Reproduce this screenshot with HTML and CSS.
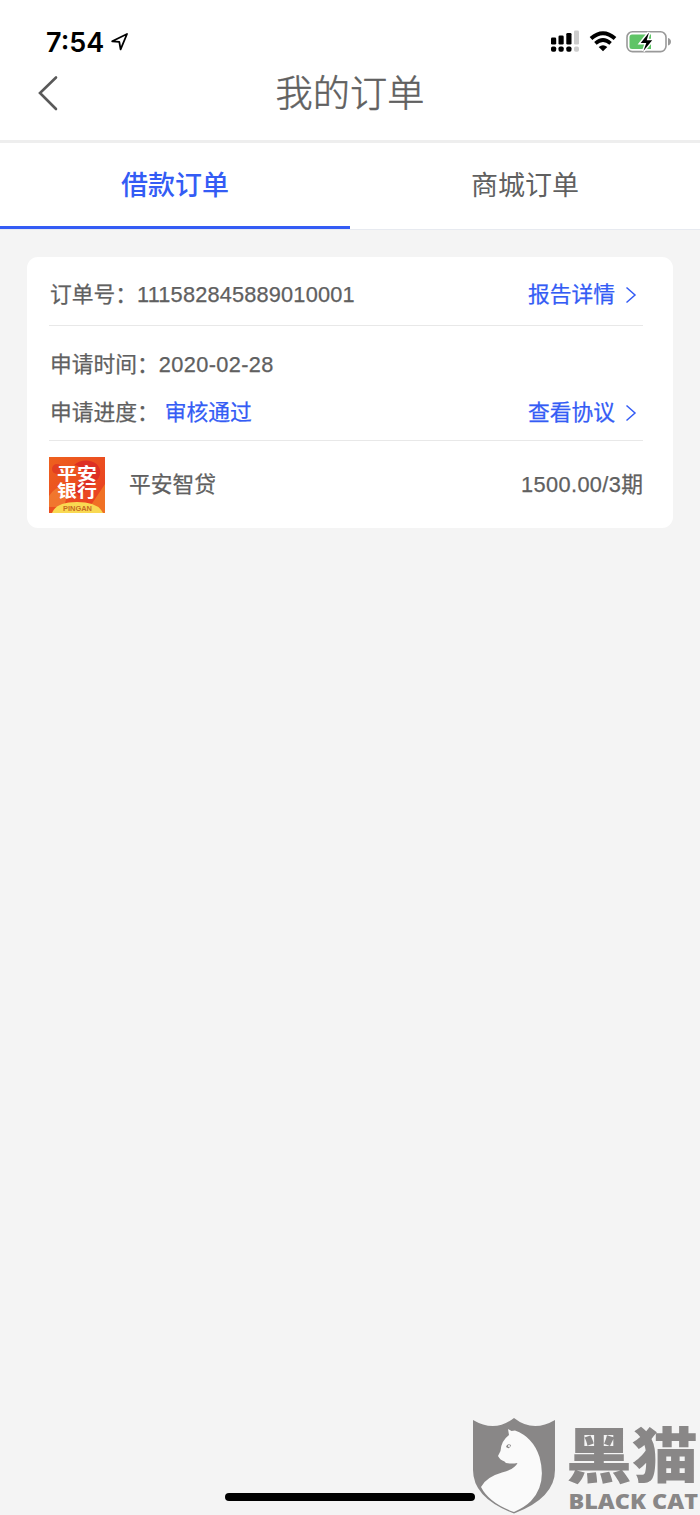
FILE: index.html
```html
<!DOCTYPE html>
<html lang="zh-CN">
<head>
<meta charset="utf-8">
<title>我的订单</title>
<link rel="stylesheet" href="styles.css">
</head>
<body>
<div class="screen">
  <header class="header">
    <div class="status">
      <span class="time">7:54</span>
      <svg class="location" width="20" height="20" viewBox="0 0 20 20"><path d="M3.200 9.300 L18 2 L11.600 17.300 L10.300 9.800 Z" fill="none" stroke="#000" stroke-width="1.800" stroke-linejoin="round"/></svg>
      <span class="grow"></span>
      <svg class="signal" width="30" height="24" viewBox="0 0 30 24">
        <g fill="#000"><rect x="0" y="7.500" width="5.200" height="7" rx="1.300"/><rect x="7.500" y="5.500" width="5.200" height="9" rx="1.300"/><rect x="15.300" y="3" width="5.200" height="11.500" rx="1.300"/><rect x="0" y="16.500" width="5.200" height="5.200" rx="1.800"/><rect x="7.500" y="16.500" width="5.200" height="5.200" rx="1.800"/><rect x="15.300" y="16.500" width="5.200" height="5.200" rx="1.800"/></g>
        <g fill="#ccc"><rect x="23" y="0.500" width="5" height="14" rx="1.300"/><rect x="23" y="16.500" width="5" height="5.200" rx="1.800"/></g>
      </svg>
      <svg class="wifi" width="28" height="22" viewBox="0 0 28 22"><path d="M2 7.500 Q14 -3 26 7.500" fill="none" stroke="#000" stroke-width="4"/><path d="M6.400 12.300 Q14 5.700 21.600 12.300" fill="none" stroke="#000" stroke-width="3.700"/><path d="M9.700 16 Q14 12.400 18.300 16 L14 20.300 Z"/></svg>
      <svg class="battery" width="46" height="24" viewBox="0 0 46 24">
        <rect x="1" y="1.800" width="39" height="19.800" rx="5.500" fill="#fff" stroke="#999" stroke-width="1.600"/>
        <path d="M6 4.400 H25 V19 H6 Q3.500 19 3.500 16.500 V7 Q3.500 4.400 6 4.400 Z" fill="#5fc466"/>
        <path d="M42 8 Q45 9 45 11.700 Q45 14.500 42 15.500 Z" fill="#999"/>
        <path d="M23 2.500 L14.700 13 H20.300 L17.400 21 L26.200 10.300 H20.700 Z" stroke="#fff" stroke-width="3" paint-order="stroke"/>
      </svg>
    </div>
    <div class="navbar">
      <svg class="back" width="24" height="38" viewBox="0 0 24 38"><path d="M20 3.500 L4 19 L20 35" fill="none" stroke="#595959" stroke-width="2.600" stroke-linecap="round"/></svg>
      <h1 class="title">我的订单</h1>
    </div>
  </header>
  <nav class="tabs">
    <a class="tab active">借款订单</a>
    <a class="tab">商城订单</a>
  </nav>
  <main class="content">
    <section class="card">
      <div class="row number">
        <span>订单号：<span class="digits">111582845889010001</span></span>
        <a class="link">报告详情<svg width="12" height="18" viewBox="0 0 12 18"><path d="M1.500 1.500 L10 9 L1.500 16.500"/></svg></a>
      </div>
      <div class="details">
        <div class="row"><span>申请时间：<span class="digits date">2020-02-28</span></span></div>
        <div class="row">
          <span>申请进度：<b class="state">审核通过</b></span>
          <a class="link">查看协议<svg width="12" height="18" viewBox="0 0 12 18"><path d="M1.500 1.500 L10 9 L1.500 16.500"/></svg></a>
        </div>
      </div>
      <div class="row product">
        <svg class="logo" width="56" height="56" viewBox="0 0 56 56">
          <defs><linearGradient id="orange" x1="0" y1="0" x2="1" y2="1"><stop offset="0" stop-color="#ee611e"/><stop offset="1" stop-color="#e83b22"/></linearGradient></defs>
          <rect width="56" height="56" fill="url(#orange)"/>
          <path d="M25 8 C34 0 49 3 51 13 C53 24 39 29 31 39 L22 33 C37 23 39 10 25 8Z" fill="#dd3024"/>
          <path d="M0 39 Q9 26 20 31 L15 50 H0Z" fill="#f48b35" opacity=".65"/>
          <circle cx="8" cy="12" r="5" fill="#e23f21"/>
          <path d="M42 48 L56 27 V56 H42Z" fill="#f07125"/>
          <path d="M3 56 Q7 45 28 45 Q49 45 54 56Z" fill="#f9d952"/>
          <text class="logo-cn" transform="translate(8 23.300) scale(1.170 1)">平安</text>
          <text class="logo-cn" transform="translate(8 40.200) scale(1.170 1)">银行</text>
          <text class="logo-en" x="28.500" y="54" textLength="29" lengthAdjust="spacingAndGlyphs">PINGAN</text>
        </svg>
        <span class="product-name">平安智贷</span>
        <span class="amount"><span class="digits date">1500.00/3</span>期</span>
      </div>
    </section>
  </main>
  <div class="home-indicator"></div>
  <div class="watermark">
    <svg width="228" height="100" viewBox="0 0 228 100">
      <path d="M1 5 Q23 18 42 3 Q61 18 83 5 V55 Q83 83 42 98.500 Q1 83 1 55Z" fill="#898787"/>
      <path d="M36 14 L39.500 16 L43 15.500 Q61 22 67.500 42 Q75 69 59 86 Q53 92 42 97 Q17 88 9 72 Q14 62 30 57.500 Q43 54 45.500 48 Q39 49 34 48 L32.500 46.500 Q28 45 26 41 L28.500 36 Q29 26 37 20 Z" fill="#fafafa"/>
      <path d="M34 32 Q35 28 39 30 Q38 35 34 32Z" fill="#898787"/><circle cx="37" cy="31" r="1" fill="#fff"/>
      <text class="mark-cn" transform="translate(94 62.500) scale(1.100 1)">黑猫</text>
      <text class="mark-en" x="96.500" y="94" textLength="129.500" lengthAdjust="spacingAndGlyphs">BLACK CAT</text>
    </svg>
  </div>
</div>
</body>
</html>
```
FILE: styles.css
```css
* { box-sizing: border-box; }
body {
  margin: 0;
  background: #f4f4f4;
  color: #606060;
  font-family: "Liberation Sans", "Noto Sans CJK SC", sans-serif;
}
.screen { position: relative; height: 1515px; display: flex; flex-direction: column; overflow: hidden; }
.header { height: 143px; background: #fff; border-bottom: 3px solid #eee; }
.status { height: 60px; padding: 24px 28px 0 46px; display: flex; align-items: center; }
.time { color: #000; font: 600 27px/34px Inter, sans-serif; width: 63px; padding-top: 2px; }
.grow { flex: 1; }
.signal { margin-right: 8px; }
.wifi { margin-right: 9px; }
.navbar { height: 66px; padding: 0 36px; display: flex; align-items: center; }
.back { flex: none; }
.title { flex: 1; margin: 2px 24px 0 0; text-align: center; font-size: 37.2px; line-height: 50px; font-weight: 300; -webkit-text-stroke: .5px currentColor; }
.tabs { display: flex; height: 87px; background: #fff; border-bottom: 1px solid #e7eaf0; }
.tab { flex: 1; padding-top: 2px; text-align: center; font-size: 27px; line-height: 83px; }
.tab.active { color: #345cf5; font-weight: 500; border-bottom: 3px solid #345cf5; }
.content { padding: 27px 27px 0; }
.card { height: 271px; padding: 0 30px 0 22px; border-radius: 11px; background: #fff; font-size: 21.75px; -webkit-text-stroke: .25px currentColor; }
.row { display: flex; align-items: center; justify-content: space-between; height: 48px; line-height: 32px; white-space: nowrap; }
.row > span:first-child { padding-left: 1px; }
.digits { letter-spacing: .18px; }
.digits.date { letter-spacing: .38px; }
.number { height: 69px; padding-top: 7px; border-bottom: 1.500px solid #e8e8e8; }
.details { height: 115px; padding-top: 15px; border-bottom: 1.500px solid #e8e8e8; }
.state { margin-left: 6px; color: #345cf5; font-weight: 400; }
.link { color: #345cf5; display: flex; align-items: center; gap: 10px; padding-right: 6px; }
.link svg { fill: none; stroke: #345cf5; stroke-width: 1.500; }
.product { height: 87px; }
.logo { flex: none; -webkit-text-stroke: 0; }
.product-name { margin-left: 24px; }
.amount { margin-left: auto; }
.logo-cn { font: 700 17px "Noto Sans CJK SC", sans-serif; fill: #fff; }
.logo-en { font: 700 6.500px "Liberation Sans", sans-serif; fill: #c66b22; text-anchor: middle; }
.home-indicator { position: absolute; left: 225px; top: 1493px; width: 250px; height: 8px; border-radius: 4px; background: #000; }
.watermark { position: absolute; left: 472px; top: 1415px; width: 228px; height: 100px; }
.mark-cn { font: 900 60px "Noto Sans CJK SC", sans-serif; fill: #898787; }
.mark-en { font: 800 21px "Open Sans", sans-serif; fill: #898787; }
```
